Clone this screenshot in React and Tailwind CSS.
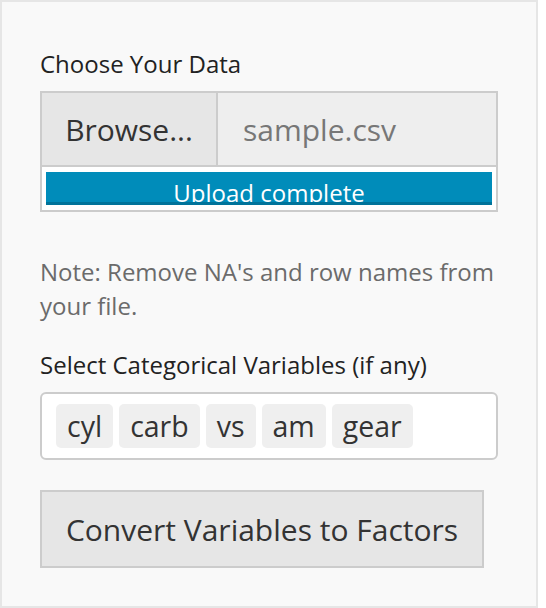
export default function App() {
  const chips = ["cyl", "carb", "vs", "am", "gear"];
  return (
    <div className="w-[546px] h-[608px] bg-white" style={{ fontFamily: '"Open Sans", sans-serif' }}>
      <div className="w-[538px] h-[608px] border-2 border-[#e6e6e6] bg-[#f9f9f9] px-[38px] pt-[45px] flex flex-col">
        <div className="text-[24px] leading-[33px] text-[#222]">Choose Your Data</div>
        <div className="mt-[11px] border-2 border-[#cccccc] flex flex-col">
          <div className="flex h-[74px] border-b-2 border-[#cccccc]">
            <div className="w-[176px] bg-[#e6e6e6] border-r-2 border-[#cccccc] flex items-center justify-center text-[30px] text-[#333]">
              Browse...
            </div>
            <div className="flex-1 bg-[#eeeeee] flex items-center pl-[25px] text-[30px] text-[#777]">
              sample.csv
            </div>
          </div>
          <div className="bg-white px-[4px] pt-[5px] pb-[5px]">
            <div className="h-[33px] bg-[#008cba] border-b-[3px] border-[#00739a] overflow-hidden flex justify-center">
              <span className="text-[24px] leading-[24px] text-white mt-[9px] whitespace-nowrap">Upload complete</span>
            </div>
          </div>
        </div>
        <div className="mt-[43px] text-[24px] leading-[34px] text-[#6b6b6b]">
          Note: Remove NA's and row names from your file.
        </div>
        <div className="mt-[25px] text-[24px] leading-[33px] text-[#222]">Select Categorical Variables (if any)</div>
        <div className="mt-[11px] h-[68px] border-2 border-[#cccccc] rounded-[6px] bg-white flex items-center pl-[14px] gap-[6px]">
          {chips.map((c) => (
            <div key={c} className="h-[44px] px-[11px] rounded-[5px] bg-[#efefef] flex items-center text-[28.5px] text-[#333]">
              {c}
            </div>
          ))}
        </div>
        <div className="mt-[30px] w-[444px] h-[78px] border-2 border-[#cccccc] bg-[#e6e6e6] flex items-center justify-center text-[30px] text-[#333]">
          Convert Variables to Factors
        </div>
      </div>
    </div>
  );
}
